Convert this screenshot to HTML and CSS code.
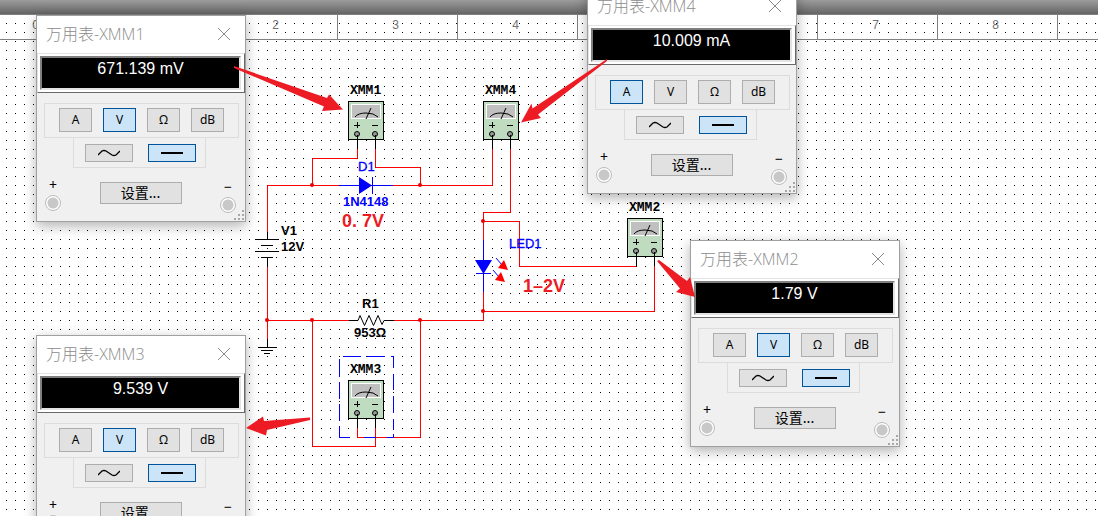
FILE: index.html
```html
<!DOCTYPE html>
<html lang="zh-CN">
<head>
<meta charset="utf-8">
<title>万用表</title>
<link rel="stylesheet" href="styles.css">
</head>
<body>
<main class="workspace">
  <header class="topbar"></header>
  <div class="ruler">
    <span class="tick">0</span><span class="tick">1</span><span class="tick">2</span><span class="tick">3</span><span class="tick">4</span><span class="tick">5</span><span class="tick">6</span><span class="tick">7</span><span class="tick">8</span><span class="tick"></span>
  </div>

  <svg class="layer" width="1098" height="516" viewBox="0 0 1098 516">
    <defs>
      <symbol id="meter" width="40" height="50" viewBox="0 0 40 50">
        <rect x=".5" y=".5" width="35" height="38" fill="#c0dcc0" stroke="#000"/>
        <rect x="3.5" y="3.5" width="29" height="14" fill="#c0c0c0" stroke="#fff"/>
        <path d="M7 16q3-4 11-4t12 4M18 18l5-11" fill="none" stroke="#000"/>
        <path d="M6 24.500h6M9.500 21v6M24 24.500h6" fill="none" stroke="#000"/>
        <circle cx="9" cy="33" r="2.500" fill="#999" stroke="#000"/>
        <circle cx="27" cy="33" r="2.500" fill="#999" stroke="#000"/>
        <path d="M9.500 34v14M27.500 34v14" stroke="#000" fill="none"/>
      </symbol>
    </defs>

    <g class="wire">
      <path d="M357.500 149v9.500h-45v27M375.500 149v18.500h45v18"/>
      <path d="M267.500 232v-46.500H339M393 185.500h99.500V149"/>
      <path d="M510.500 149v63.500h-27V240M483.500 221.500h36v45H636"/>
      <path d="M654.500 266v45.500h-171M483.500 292v28.500H394M349 320.500h-81.500M267.500 267v72"/>
      <path d="M357.500 428v9.500h63v-117M375.500 428v18.500h-63v-126"/>
    </g>
    <g class="node">
      <circle cx="312" cy="185" r="2"/><circle cx="420" cy="185" r="2"/>
      <circle cx="483" cy="221" r="2"/><circle cx="483" cy="311" r="2"/>
      <circle cx="267" cy="320" r="2"/><circle cx="312" cy="320" r="2"/><circle cx="420" cy="320" r="2"/>
    </g>
    <g class="part">
      <path d="M267.500 232v7M255 239.500h24M261 245.500h12M255 251.500h24M261 257.500h12M267.500 257v10"/>
      <path d="M267.500 339v8M258 347.500h19M261 350.500h12M264 353.500h6"/>
      <path d="M349 320.500h9l2-5 4.500 10 4.500-10 4.500 10 4.500-10 4 9 2-4h10"/>
    </g>
    <g class="blue">
      <path d="M339 185.500h54M372.500 177v17M483.500 240v52M476 273.500h15M496 258l6 7M493 270l6 7"/>
      <path class="solid" d="M359 177l13 8.500-13 8.500zM475 260h17l-8.500 14z"/>
      <path d="M343 356.500h18M367 356.500h18M391 356.500h2.500V368M393.500 374v16M393.500 396v17M393.500 419v11M393.500 434v3.500h-7M339.500 359v18M339.500 382v17M339.500 404v17M339.500 426v11.500H350M364 437.500h12"/>
    </g>
    <path class="lamp" d="M504 260l4 10-10-2zM501 272l4 10-10-2z"/>

    <use href="#meter" x="348" y="101"/>
    <use href="#meter" x="483" y="101"/>
    <use href="#meter" x="627" y="218"/>
    <use href="#meter" x="348" y="380"/>

    <g class="ref">
      <text x="350" y="94">XMM1</text>
      <text x="485" y="94">XMM4</text>
      <text x="629" y="211">XMM2</text>
      <text x="350" y="373">XMM3</text>
    </g>
    <g class="value">
      <text x="281" y="235">V1</text>
      <text x="281" y="251">12V</text>
      <text x="362" y="308">R1</text>
      <text x="354" y="337">953Ω</text>
    </g>
    <g class="value value-blue">
      <text x="343" y="206">1N4148</text>
      <text class="light" x="358" y="171">D1</text>
      <text class="light" x="509" y="248">LED1</text>
    </g>
    <g class="note">
      <text x="342" y="227">0. 7V</text>
      <text x="523" y="292">1–2V</text>
    </g>
  </svg>

  <section class="window win-xmm1" aria-label="XMM1">
    <div class="titlebar"><span>万用表-XMM1</span><button class="close" aria-label="关闭"><svg width="12" height="12" viewBox="0 0 12 12"><path d="M0 0l12 12M12 0L0 12"/></svg></button></div>
    <div class="bezel"><output class="display">671.139 mV</output></div>
    <div class="modes"><button class="key">A</button><button class="key on">V</button><button class="key">Ω</button><button class="key">dB</button></div>
    <div class="signal"><button class="key wide" aria-label="AC"><svg width="22" height="8" viewBox="0 0 22 8"><path d="M0 6l4-4q2-1 4 0l6 4q2 1 4 0l4-4" /></svg></button><button class="key wide on" aria-label="DC"><svg width="22" height="8" viewBox="0 0 22 8"><path class="dc" d="M0 4h22"/></svg></button></div>
    <div class="foot"><div class="terminal"><span>+</span><i class="jack"></i></div><button class="key setup">设置...</button><div class="terminal neg"><span>−</span><i class="jack"></i></div></div>
    <svg class="grip" width="11" height="11" viewBox="0 0 11 11"><path d="M8 0h2v2H8zM4 4h2v2H4zM8 4h2v2H8zM0 8h2v2H0zM4 8h2v2H4zM8 8h2v2H8z"/></svg>
  </section>

  <section class="window win-xmm4" aria-label="XMM4">
    <div class="titlebar"><span>万用表-XMM4</span><button class="close" aria-label="关闭"><svg width="12" height="12" viewBox="0 0 12 12"><path d="M0 0l12 12M12 0L0 12"/></svg></button></div>
    <div class="bezel"><output class="display">10.009 mA</output></div>
    <div class="modes"><button class="key on">A</button><button class="key">V</button><button class="key">Ω</button><button class="key">dB</button></div>
    <div class="signal"><button class="key wide" aria-label="AC"><svg width="22" height="8" viewBox="0 0 22 8"><path d="M0 6l4-4q2-1 4 0l6 4q2 1 4 0l4-4" /></svg></button><button class="key wide on" aria-label="DC"><svg width="22" height="8" viewBox="0 0 22 8"><path class="dc" d="M0 4h22"/></svg></button></div>
    <div class="foot"><div class="terminal"><span>+</span><i class="jack"></i></div><button class="key setup">设置...</button><div class="terminal neg"><span>−</span><i class="jack"></i></div></div>
    <svg class="grip" width="11" height="11" viewBox="0 0 11 11"><path d="M8 0h2v2H8zM4 4h2v2H4zM8 4h2v2H8zM0 8h2v2H0zM4 8h2v2H4zM8 8h2v2H8z"/></svg>
  </section>

  <section class="window win-xmm2" aria-label="XMM2">
    <div class="titlebar"><span>万用表-XMM2</span><button class="close" aria-label="关闭"><svg width="12" height="12" viewBox="0 0 12 12"><path d="M0 0l12 12M12 0L0 12"/></svg></button></div>
    <div class="bezel"><output class="display">1.79 V</output></div>
    <div class="modes"><button class="key">A</button><button class="key on">V</button><button class="key">Ω</button><button class="key">dB</button></div>
    <div class="signal"><button class="key wide" aria-label="AC"><svg width="22" height="8" viewBox="0 0 22 8"><path d="M0 6l4-4q2-1 4 0l6 4q2 1 4 0l4-4" /></svg></button><button class="key wide on" aria-label="DC"><svg width="22" height="8" viewBox="0 0 22 8"><path class="dc" d="M0 4h22"/></svg></button></div>
    <div class="foot"><div class="terminal"><span>+</span><i class="jack"></i></div><button class="key setup">设置...</button><div class="terminal neg"><span>−</span><i class="jack"></i></div></div>
    <svg class="grip" width="11" height="11" viewBox="0 0 11 11"><path d="M8 0h2v2H8zM4 4h2v2H4zM8 4h2v2H8zM0 8h2v2H0zM4 8h2v2H4zM8 8h2v2H8z"/></svg>
  </section>

  <section class="window win-xmm3" aria-label="XMM3">
    <div class="titlebar"><span>万用表-XMM3</span><button class="close" aria-label="关闭"><svg width="12" height="12" viewBox="0 0 12 12"><path d="M0 0l12 12M12 0L0 12"/></svg></button></div>
    <div class="bezel"><output class="display">9.539 V</output></div>
    <div class="modes"><button class="key">A</button><button class="key on">V</button><button class="key">Ω</button><button class="key">dB</button></div>
    <div class="signal"><button class="key wide" aria-label="AC"><svg width="22" height="8" viewBox="0 0 22 8"><path d="M0 6l4-4q2-1 4 0l6 4q2 1 4 0l4-4" /></svg></button><button class="key wide on" aria-label="DC"><svg width="22" height="8" viewBox="0 0 22 8"><path class="dc" d="M0 4h22"/></svg></button></div>
    <div class="foot"><div class="terminal"><span>+</span><i class="jack"></i></div><button class="key setup">设置...</button><div class="terminal neg"><span>−</span><i class="jack"></i></div></div>
    <svg class="grip" width="11" height="11" viewBox="0 0 11 11"><path d="M8 0h2v2H8zM4 4h2v2H4zM8 4h2v2H8zM0 8h2v2H0zM4 8h2v2H4zM8 8h2v2H8z"/></svg>
  </section>

  <svg class="layer arrows" width="1098" height="516" viewBox="0 0 1098 516">
    <path d="M234 66L327 98L329 94.500L343 109.500L322 111L324 106.500L234 68z"/>
    <path d="M607 59L532.500 108.500L531.500 103.500L521 122.500L541 118L538 114.500L607 61z"/>
    <path d="M310 417.500L264 421L263 416.500L246 428L266 435.500L267 430L310 420z"/>
    <path d="M659 260L687 281L690 277L695 297L676 292L680 288.500L657 261z"/>
  </svg>
</main>
</body>
</html>
```

FILE: styles.css
```css
* { box-sizing: border-box; }

body {
  margin: 0;
  font-family: "Open Sans", "Noto Sans CJK SC", sans-serif;
}

.workspace {
  position: relative;
  height: 100vh;
  overflow: hidden;
  background-color: #fff;
  background-image: conic-gradient(from 0deg at 1px 1px, transparent 270deg, #000 270deg);
  background-size: 9px 9px;
  background-position: 6px 5px;
}

.topbar {
  height: 14px;
  background: linear-gradient(#9c9c9c, #646464);
}

.ruler {
  display: flex;
  height: 26px;
  border-top: 1px solid #808080;
  border-bottom: 1px solid #808080;
  margin-left: -22px;
}

.tick {
  flex: none;
  width: 120px;
  padding-right: 4px;
  border-right: 1px solid #808080;
  color: #707070;
  font: 12px/21px "Liberation Sans", sans-serif;
  text-align: center;
}

.layer {
  position: absolute;
  top: 0;
  left: 0;
}

.wire path { fill: none; stroke: #f00; }
.node circle { fill: #e00; }
.part path { fill: none; stroke: #000; }
.blue path { fill: none; stroke: #00f; }
.blue .solid { fill: #00f; stroke: none; }
.lamp { fill: #f00; }

.ref text { font: bold 13px "Liberation Mono", monospace; }
.value text { font: bold 13px "Liberation Sans", sans-serif; }
.value-blue text { fill: #00f; }
.value-blue .light { font-weight: normal; stroke: #00f; stroke-width: .3px; }
.note text { font: bold 18px "Liberation Sans", sans-serif; fill: #ed1c24; }

.arrows { pointer-events: none; }
.arrows path { fill: #ed1c24; }

.window {
  position: absolute;
  width: 210px;
  border: 1px solid #a0a0a0;
  background: #f0f0f0;
  box-shadow: 0 4px 12px rgba(0, 0, 0, .3);
}

.win-xmm1 { left: 36px; top: 15px; }
.win-xmm4 { left: 587px; top: -13px; }
.win-xmm2 { left: 690px; top: 240px; }
.win-xmm3 { left: 36px; top: 335px; }

.titlebar {
  display: flex;
  align-items: flex-start;
  justify-content: space-between;
  height: 37px;
  padding: 6px 15px 0 9px;
  background: #fff;
  color: #8c8c8c;
  font-size: 16px;
  line-height: 24px;
  font-weight: 300;
}

.close {
  display: flex;
  padding: 0;
  margin-top: 6px;
  border: 0;
  background: none;
}

.close path { stroke: #888; }

.bezel {
  height: 40px;
  padding: 2px 3px 2px 2px;
  border: 1px solid;
  border-color: #e3e3e3 #696969 #696969 #e3e3e3;
  background: #fff;
}

.display {
  display: block;
  height: 34px;
  border: 2px solid;
  border-color: #808080 #e3e3e3 #e3e3e3 #808080;
  background: #000;
  color: #fff;
  font: 16px/22px "Liberation Sans", sans-serif;
  text-align: center;
}

.modes {
  display: flex;
  gap: 11px;
  width: 195px;
  margin: 10px 0 0 7px;
  padding: 4px 0 5px 14px;
  border: 1px solid #dcdcdc;
}

.signal {
  display: flex;
  gap: 15px;
  width: 133px;
  margin-left: 36px;
  padding: 6px 0 5px 11px;
  border: 1px solid #dcdcdc;
  border-top: 0;
}

.key {
  display: flex;
  align-items: center;
  justify-content: center;
  width: 33px;
  height: 24px;
  padding: 0;
  border: 1px solid #adadad;
  background: #e1e1e1;
  color: #000;
  font: 12px/16px "Noto Sans", sans-serif;
}

.key.on {
  border-color: #005499;
  background: #cce4f7;
}

.key.wide {
  width: 48px;
  height: 18px;
}

.wide path { fill: none; stroke: #000; stroke-width: 1.3px; }
.wide .dc { stroke-width: 2px; }

.key.setup {
  width: 82px;
  height: 22px;
  margin-top: 2px;
  padding-bottom: 3px;
  font: 14px/16px "Noto Sans CJK SC", sans-serif;
}

.foot {
  display: flex;
  justify-content: space-between;
  height: 53px;
  padding: 12px 9px 0 8px;
}

.terminal {
  display: flex;
  flex-direction: column;
  align-items: center;
  gap: 5px;
  font: 14px/10px "Noto Sans", sans-serif;
}

.terminal.neg { margin-top: 2px; }

.jack {
  width: 16px;
  height: 16px;
  border: 1px solid #bbb;
  border-radius: 50%;
  background: radial-gradient(circle, #c8c8c8 5px, #fff 6px);
}

.grip {
  position: absolute;
  right: 0;
  bottom: 0;
}

.grip path { fill: #a8a8a8; }
```
